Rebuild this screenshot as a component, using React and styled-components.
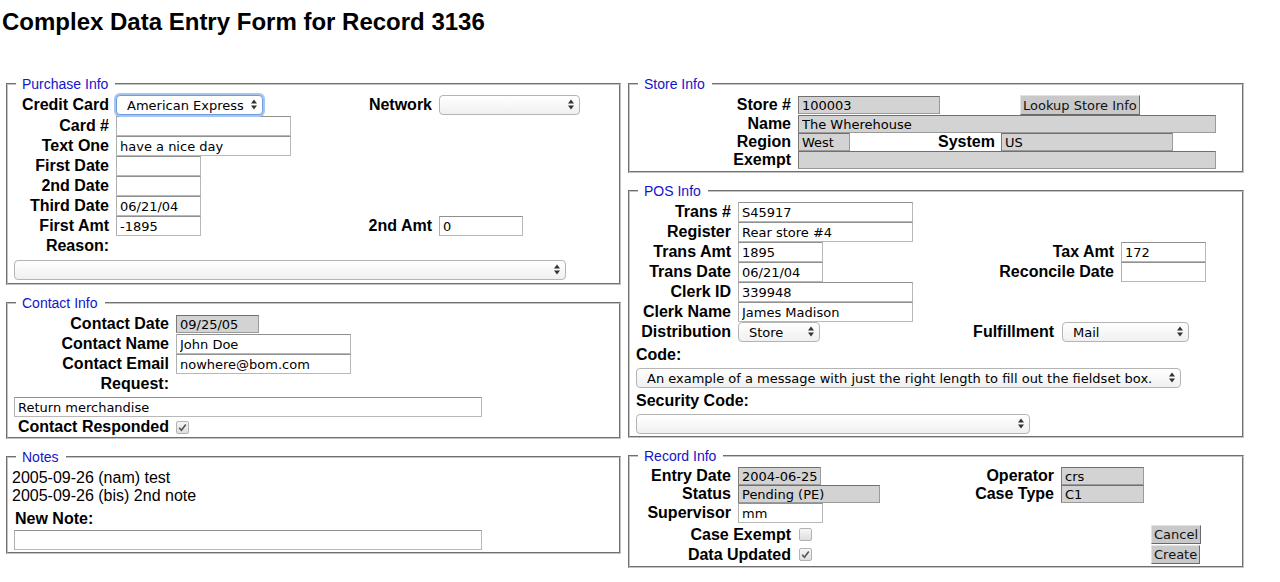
import React from 'react';
import styled, { createGlobalStyle } from 'styled-components';

const GlobalStyle = createGlobalStyle`
  body {
    margin: 0;
    background: #ffffff;
    color: #000000;
    font-family: "Liberation Sans", Arial, sans-serif;
  }
`

const Page = styled.div`
  padding-top: 8px;
`

const Title = styled.h1`
  margin: 0 0 40px 2px;
  font-size: 24px;
  line-height: 28px;
  font-weight: bold;
`

const Columns = styled.div`
  display: grid;
  grid-template-columns: 615px 616px;
  column-gap: 7px;
  padding-left: 6px;
  align-items: start;
`

const Column = styled.div`
  display: flex;
  flex-direction: column;
  gap: 10px;
`

const Box = styled.fieldset`
  margin: 0;
  min-width: 0;
  padding: ${p => (p.$top === undefined ? 3 : p.$top)}px 6px ${p => (p.$bottom === undefined ? 2 : p.$bottom)}px 6px;
  border: 2px groove #c4c4c4;
`

const Legend = styled.legend`
  margin-left: 2px;
  padding: 0 7px 0 6px;
  font-size: 14px;
  line-height: 16px;
  color: #1414c8;
`

const Grid = styled.div`
  --lh: ${p => p.$lh || 20}px;
  display: grid;
  grid-template-columns: ${p => p.$cols};
  column-gap: 7px;
  align-items: center;
  justify-items: start;
`

const Label = styled.label`
  grid-column: ${p => p.$col || 1};
  justify-self: stretch;
  margin-top: ${p => (p.$left ? 3 : 0)}px;
  text-align: ${p => (p.$left ? 'left' : 'right')};
  font-size: 16px;
  font-weight: bold;
  line-height: var(--lh, 20px);
  white-space: nowrap;
`

const SubLabel = styled(Label)`
  flex: none;
  width: ${p => p.$w}px;
`

const Cell = styled.div`
  grid-column: ${p => (p.$start ? `${p.$start} / span ${p.$span || 1}` : `span ${p.$span || 1}`)};
  justify-self: stretch;
  display: flex;
  align-items: center;
  justify-content: ${p => (p.$end ? 'flex-end' : 'flex-start')};
  gap: ${p => p.$gap || 0}px;
  margin-top: ${p => p.$top || 0}px;
  padding-right: ${p => p.$right || 0}px;
`

const TextInput = styled.input`
  box-sizing: border-box;
  width: ${p => p.$w}px;
  height: ${p => (p.$gray ? 18 : 20)}px;
  margin: 0;
  padding: 0 3px;
  font-family: "DejaVu Sans", Verdana, sans-serif;
  font-size: 13px;
  color: #000000;
  background: ${p => (p.$gray ? '#d3d3d3' : '#ffffff')};
  border: 1px solid ${p => (p.$gray ? '#9a9a9a' : '#b8b8b8')};
  border-top-color: ${p => (p.$gray ? '#707070' : '#909090')};
  border-left-color: ${p => (p.$gray ? '#7a7a7a' : '#b0b0b0')};
  border-radius: 0;
  outline: none;
`

const SelectWrap = styled.span`
  position: relative;
  display: inline-block;
  flex: none;
  width: ${p => p.$w}px;
  height: 20px;
  margin: ${p => (p.$focus ? 1 : 0)}px 0;
`

const Select = styled.select`
  appearance: none;
  -webkit-appearance: none;
  box-sizing: border-box;
  width: 100%;
  height: 100%;
  margin: 0;
  padding: 0 18px 0 10px;
  font-family: "DejaVu Sans", Verdana, sans-serif;
  font-size: 13px;
  color: #000000;
  border: 1px solid ${p => (p.$focus ? '#6d9de0' : '#b4b4b4')};
  border-radius: 4px;
  background: ${p => (p.$focus ? '#ffffff' : 'linear-gradient(#ffffff, #f0f0f0)')};
  box-shadow: ${p => (p.$focus ? '0 0 0 2px #a6c6ef' : 'none')};
  outline: none;
`

const Arrows = styled.svg`
  position: absolute;
  right: 6px;
  top: 4px;
  pointer-events: none;
`

const Check = styled.span`
  box-sizing: border-box;
  display: inline-flex;
  align-items: center;
  justify-content: center;
  flex: none;
  width: 13px;
  height: 13px;
  border: 1px solid #b3b3b3;
  border-radius: 2px;
  background: linear-gradient(#f6f6f6, #dedede);
`

const Button = styled.button`
  height: ${p => p.$h || 19}px;
  margin: 0 0 0 ${p => p.$shift || 0}px;
  padding: 0 2px;
  font-family: "DejaVu Sans", Verdana, sans-serif;
  font-size: 13px;
  line-height: 17px;
  color: #111111;
  background: #c9c9c9;
  border: 1px solid;
  border-color: #e2e2e2 #6a6a6a #6a6a6a #e2e2e2;
  border-radius: 0;
`

const NoteLine = styled.div`
  margin-left: -2px;
  font-size: 16px;
  line-height: 18px;
`

const NoteLabel = styled.label`
  display: block;
  margin: 5px 0 2px 1px;
  font-size: 16px;
  font-weight: bold;
  line-height: 18px;
`

const Dropdown = ({ w, focus, value = '' }) => (
  <SelectWrap $w={w} $focus={focus}>
    <Select $focus={focus} defaultValue={value}>
      <option>{value}</option>
    </Select>
    <Arrows width="6" height="11" viewBox="0 0 6 11">
      <path d="M0 4.5 L3 0.5 L6 4.5 Z M0 6.5 L3 10.5 L6 6.5 Z" fill="#333333" />
    </Arrows>
  </SelectWrap>
)

const CheckBox = ({ checked }) => (
  <Check>
    {checked && (
      <svg width="9" height="9" viewBox="0 0 9 9">
        <path d="M1.2 4.8 L3.4 7.2 L7.8 1.4" fill="none" stroke="#555555" strokeWidth="1.6" />
      </svg>
    )}
  </Check>
)

const PurchaseInfo = () => (
  <Box $top={2} $bottom={3}>
    <Legend>Purchase Info</Legend>
    <Grid $cols="95px 243px 66px 1fr">
      <Label>Credit Card</Label>
      <Dropdown w={147} focus value="American Express" />
      <Label $col={3}>Network</Label>
      <Dropdown w={141} />
      <Label>Card #</Label>
      <TextInput $w={175} />
      <Label>Text One</Label>
      <TextInput $w={175} defaultValue="have a nice day" />
      <Label>First Date</Label>
      <TextInput $w={85} />
      <Label>2nd Date</Label>
      <TextInput $w={85} />
      <Label>Third Date</Label>
      <TextInput $w={85} defaultValue="06/21/04" />
      <Label>First Amt</Label>
      <TextInput $w={85} defaultValue="-1895" />
      <Label $col={3}>2nd Amt</Label>
      <TextInput $w={84} defaultValue="0" />
      <Label>Reason:</Label>
      <Cell $start={1} $span={4} $top={4}>
        <Dropdown w={552} />
      </Cell>
    </Grid>
  </Box>
)

const ContactInfo = () => (
  <Box $bottom={0}>
    <Legend>Contact Info</Legend>
    <Grid $cols="155px 1fr">
      <Label>Contact Date</Label>
      <TextInput $w={83} $gray readOnly defaultValue="09/25/05" />
      <Label>Contact Name</Label>
      <TextInput $w={175} defaultValue="John Doe" />
      <Label>Contact Email</Label>
      <TextInput $w={175} defaultValue="nowhere@bom.com" />
      <Label>Request:</Label>
      <Cell $start={1} $span={2} $top={3}>
        <TextInput $w={468} defaultValue="Return merchandise" />
      </Cell>
      <Label>Contact Responded</Label>
      <Cell>
        <CheckBox checked />
      </Cell>
    </Grid>
  </Box>
)

const Notes = () => (
  <Box $top={4}>
    <Legend>Notes</Legend>
    <NoteLine>2005-09-26 (nam) test</NoteLine>
    <NoteLine>2005-09-26 (bis) 2nd note</NoteLine>
    <NoteLabel>New Note:</NoteLabel>
    <TextInput $w={468} />
  </Box>
)

const StoreInfo = () => (
  <Box $bottom={2}>
    <Legend>Store Info</Legend>
    <Grid $cols="155px 133px 56px 1fr" $lh={18}>
      <Label>Store #</Label>
      <Cell $span={2}>
        <TextInput $w={142} $gray readOnly defaultValue="100003" />
      </Cell>
      <Cell>
        <Button $shift={19} $h={20}>Lookup Store Info</Button>
      </Cell>
      <Label>Name</Label>
      <Cell $span={3}>
        <TextInput $w={418} $gray readOnly defaultValue="The Wherehouse" />
      </Cell>
      <Label>Region</Label>
      <TextInput $w={52} $gray readOnly defaultValue="West" />
      <Label $col={3}>System</Label>
      <TextInput $w={172} $gray readOnly defaultValue="US" />
      <Label>Exempt</Label>
      <Cell $span={3}>
        <TextInput $w={418} $gray readOnly />
      </Cell>
    </Grid>
  </Box>
)

const PosInfo = () => (
  <Box $bottom={2}>
    <Legend>POS Info</Legend>
    <Grid $cols="95px 248px 121px 1fr">
      <Label>Trans #</Label>
      <TextInput $w={175} defaultValue="S45917" />
      <Label>Register</Label>
      <TextInput $w={175} defaultValue="Rear store #4" />
      <Label>Trans Amt</Label>
      <TextInput $w={85} defaultValue="1895" />
      <Label $col={3}>Tax Amt</Label>
      <TextInput $w={85} defaultValue="172" />
      <Label>Trans Date</Label>
      <TextInput $w={85} defaultValue="06/21/04" />
      <Label $col={3}>Reconcile Date</Label>
      <TextInput $w={85} />
      <Label>Clerk ID</Label>
      <TextInput $w={175} defaultValue="339948" />
      <Label>Clerk Name</Label>
      <TextInput $w={175} defaultValue="James Madison" />
      <Label>Distribution</Label>
      <Dropdown w={82} value="Store" />
      <Cell $start={3} $span={2} $end $gap={8} $right={47}>
        <SubLabel as="span" $w={90}>Fulfillment</SubLabel>
        <Dropdown w={127} value="Mail" />
      </Cell>
      <Label $col="1 / span 4" $left>Code:</Label>
      <Cell $start={1} $span={4} $top={3}>
        <Dropdown w={545} value="An example of a message with just the right length to fill out the fieldset box." />
      </Cell>
      <Label $col="1 / span 4" $left>Security Code:</Label>
      <Cell $start={1} $span={4} $top={3}>
        <Dropdown w={394} />
      </Cell>
    </Grid>
  </Box>
)

const RecordInfo = () => (
  <Box $bottom={2}>
    <Legend>Record Info</Legend>
    <Grid $cols="95px 209px 100px 1fr" $lh={18}>
      <Label>Entry Date</Label>
      <TextInput $w={83} $gray readOnly defaultValue="2004-06-25" />
      <Label $col={3}>Operator</Label>
      <TextInput $w={83} $gray readOnly defaultValue="crs" />
      <Label>Status</Label>
      <TextInput $w={142} $gray readOnly defaultValue="Pending (PE)" />
      <Label $col={3}>Case Type</Label>
      <TextInput $w={83} $gray readOnly defaultValue="C1" />
      <Label>Supervisor</Label>
      <TextInput $w={85} defaultValue="mm" />
      <Cell $start={1} $span={2} $gap={8} $top={2}>
        <SubLabel as="span" $w={155}>Case Exempt</SubLabel>
        <CheckBox />
      </Cell>
      <Cell $start={4} $top={2}>
        <Button $shift={90}>Cancel</Button>
      </Cell>
      <Cell $start={1} $span={2} $gap={8} $top={1}>
        <SubLabel as="span" $w={155}>Data Updated</SubLabel>
        <CheckBox checked />
      </Cell>
      <Cell $start={4} $top={1}>
        <Button $shift={90}>Create</Button>
      </Cell>
    </Grid>
  </Box>
)

const App = () => (
  <Page>
    <GlobalStyle />
    <Title>Complex Data Entry Form for Record 3136</Title>
    <Columns>
      <Column>
        <PurchaseInfo />
        <ContactInfo />
        <Notes />
      </Column>
      <Column>
        <StoreInfo />
        <PosInfo />
        <RecordInfo />
      </Column>
    </Columns>
  </Page>
)

export default App;
